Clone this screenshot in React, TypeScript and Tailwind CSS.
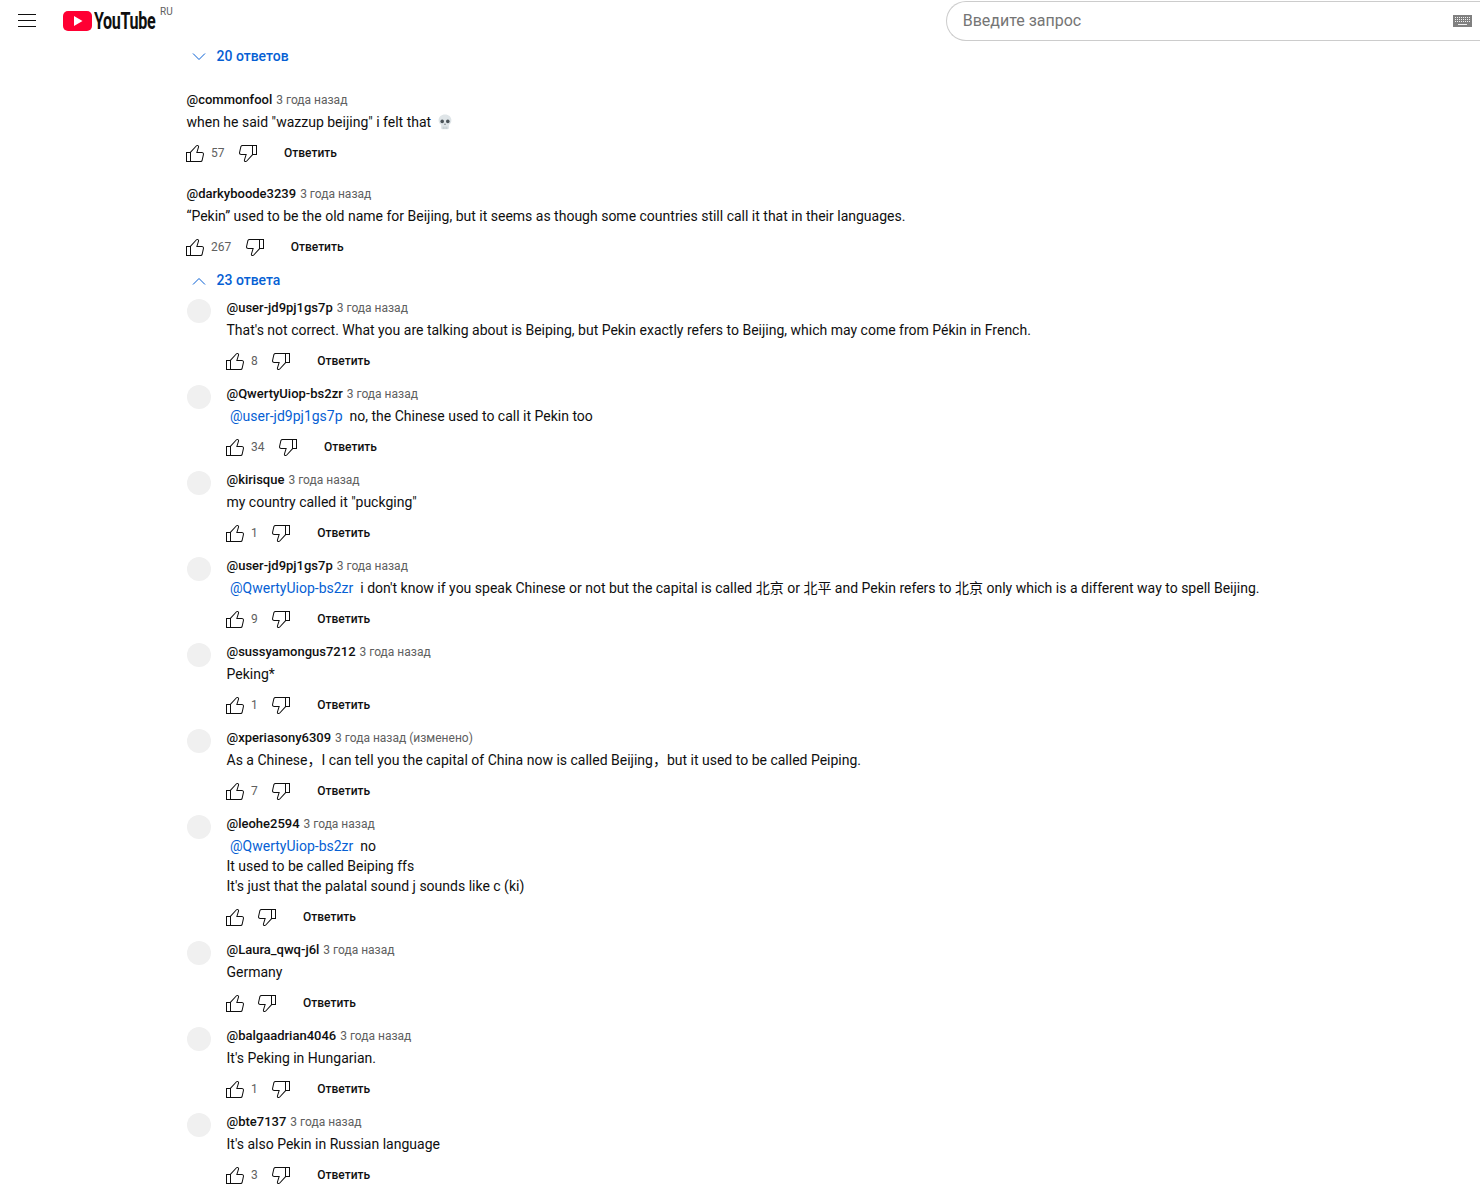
import type { ReactNode } from 'react'

const likePath =
  'M18.77,11h-4.23l1.52-4.94C16.38,5.03,15.54,4,14.38,4c-0.58,0-1.14,0.24-1.52,0.65L7,11H3v10h4h1h9.43c1.06,0,1.98-0.67,2.19-1.61l1.34-6C21.23,12.15,20.18,11,18.77,11z M7,20H4v-8h3V20z M19.98,13.17l-1.34,6C18.54,19.65,18.03,20,17.43,20H8v-8.61l5.6-6.06C13.79,5.12,14.08,5,14.38,5c0.26,0,0.5,0.11,0.63,0.3c0.07,0.1,0.15,0.26,0.09,0.47l-1.52,4.94L13.18,12h1.35h4.23c0.41,0,0.8,0.17,1.03,0.46C19.92,12.63,20.05,12.87,19.98,13.17z'
const dislikePath =
  'M17,4h-1H6.57C5.5,4,4.59,4.67,4.38,5.61l-1.34,6C2.77,12.85,3.82,14,5.23,14h4.23l-1.52,4.94C7.62,19.97,8.46,21,9.62,21c0.58,0,1.14-0.24,1.52-0.65L17,14h4V4H17z M10.4,19.67C10.21,19.88,9.92,20,9.62,20c-0.26,0-0.5-0.11-0.63-0.3c-0.07-0.1-0.15-0.26-0.09-0.47l1.52-4.94l0.4-1.29H9.46H5.23c-0.41,0-0.8-0.17-1.03-0.46c-0.12-0.15-0.25-0.4-0.18-0.72l1.34-6C5.46,5.35,5.97,5,6.57,5H16v8.61L10.4,19.67z M20,13h-3V5h3V13z'

function Icon({ d }: { d: string }) {
  return (
    <svg viewBox="0 0 24 24" className="h-6 w-6 shrink-0 fill-[#0f0f0f]">
      <path d={d} />
    </svg>
  )
}

function Mention({ children }: { children: string }) {
  return <span className="ml-[3.5px] mr-[7px] text-[#065fd4]">{children}</span>
}

// the fullwidth comma is narrower in the reference than in the CJK font here
function Comma() {
  return <span className="tracking-[-3.5px]">，</span>
}

function Skull() {
  return (
    <svg viewBox="0 0 14 16" className="ml-[3px] inline-block h-4 w-[14px] align-[-3px]">
      <path d="M7 .5C3.2.5.6 2.9.6 6.2c0 2.1 1 3.7 2.5 4.6v3.1c0 .8.6 1.4 1.4 1.4h5c.8 0 1.4-.6 1.4-1.4v-3.1c1.5-.9 2.5-2.5 2.5-4.6C13.4 2.9 10.8.5 7 .5z" fill="#dfe5e8" />
      <circle cx="4.2" cy="7.4" r="1.8" fill="#4b5358" />
      <circle cx="9.8" cy="7.4" r="1.8" fill="#4b5358" />
      <path d="M6.2 10.8h1.6L7 9.2z" fill="#4b5358" />
      <path d="M5.2 12.6v2.4M7 12.6v2.4M8.8 12.6v2.4" stroke="#a9b2b7" strokeWidth=".6" />
    </svg>
  )
}

type Comment = {
  name: string
  edited?: boolean
  count?: string
  body: ReactNode
}

const replies: Comment[] = [
  {
    name: '@user-jd9pj1gs7p',
    count: '8',
    body: "That's not correct. What you are talking about is Beiping, but Pekin exactly refers to Beijing, which may come from Pékin in French.",
  },
  {
    name: '@QwertyUiop-bs2zr',
    count: '34',
    body: (
      <>
        <Mention>@user-jd9pj1gs7p</Mention>no, the Chinese used to call it Pekin too
      </>
    ),
  },
  { name: '@kirisque', count: '1', body: 'my country called it "puckging"' },
  {
    name: '@user-jd9pj1gs7p',
    count: '9',
    body: (
      <>
        <Mention>@QwertyUiop-bs2zr</Mention>i don't know if you speak Chinese or not but the capital is called 北京 or 北平 and Pekin refers to 北京 only which is a different way to spell Beijing.
      </>
    ),
  },
  { name: '@sussyamongus7212', count: '1', body: 'Peking*' },
  {
    name: '@xperiasony6309',
    edited: true,
    count: '7',
    body: (
      <>
        As a Chinese<Comma /> I can tell you the capital of China now is called Beijing<Comma /> but it used to be called Peiping.
      </>
    ),
  },
  {
    name: '@leohe2594',
    body: (
      <>
        <Mention>@QwertyUiop-bs2zr</Mention>no
        <br />
        It used to be called Beiping ffs
        <br />
        It's just that the palatal sound j sounds like c (ki)
      </>
    ),
  },
  { name: '@Laura_qwq-j6l', body: 'Germany' },
  { name: '@balgaadrian4046', count: '1', body: "It's Peking in Hungarian." },
  { name: '@bte7137', count: '3', body: "It's also Pekin in Russian language" },
]

function CommentBody({ comment }: { comment: Comment }) {
  return (
    <div className="min-w-0 flex-1">
      <div className="flex h-[18px] items-center pl-[0.5px]">
        <span className="text-[13px] font-medium text-[#0f0f0f]">{comment.name}</span>
        <span className="ml-1 text-xs text-[#606060]">
          3 года назад
          {comment.edited && ' (изменено)'}
        </span>
      </div>
      <div className="mt-[3px] pl-[0.5px] text-sm leading-5 text-[#0f0f0f]">{comment.body}</div>
      <div className="mt-[9px] -ml-[3px] flex h-6 items-center">
        <Icon d={likePath} />
        {comment.count && <span className="ml-1 text-xs text-[#606060]">{comment.count}</span>}
        <div className={comment.count ? 'ml-[11.5px]' : 'ml-2'}>
          <Icon d={dislikePath} />
        </div>
        <span className="ml-6 text-xs font-medium text-[#0f0f0f]">Ответить</span>
      </div>
    </div>
  )
}

function RepliesToggle({ open, label }: { open: boolean; label: string }) {
  return (
    <div className="flex h-5 items-center pl-[6px] text-sm font-medium text-[#065fd4]">
      <svg viewBox="0 0 14 8" className="mt-[2px] h-2 w-[14px] fill-none stroke-[#065fd4]">
        <path d={open ? 'M1 7.5l6-6 6 6' : 'M1 .5l6 6 6-6'} />
      </svg>
      <span className="ml-[10.5px]">{label}</span>
    </div>
  )
}

export default function App() {
  return (
    <div className="h-[1197px] overflow-hidden bg-white font-['Roboto','Noto_Sans_CJK_SC',sans-serif]">
      <header className="flex h-[41px] items-start pt-px">
        <div className="ml-[18px] mt-[13px] flex w-[18px] flex-col gap-[5px]">
          <div className="h-px bg-[#0f0f0f]" />
          <div className="h-px bg-[#0f0f0f]" />
          <div className="h-px bg-[#0f0f0f]" />
        </div>
        <div className="ml-[27px] mt-[10px] flex h-5 w-[29px] items-center justify-center rounded-[5px] bg-[#ff0033]">
          <svg viewBox="0 0 10 10" className="h-[10px] w-[10px] fill-white">
            <path d="M1 0l8.5 5L1 10z" />
          </svg>
        </div>
        <span className="ml-[2px] mt-[7px] w-[62px] origin-left scale-x-[0.7] text-[23px] leading-7 font-bold tracking-[-0.5px] text-[#0f0f0f]">
          YouTube
        </span>
        <span className="ml-1 mt-[5px] text-[10px] leading-3 text-[#606060]">RU</span>
        <div className="ml-[773px] flex h-10 flex-1 items-center justify-between rounded-l-[20px] border border-r-0 border-[#cccccc] pl-4 pr-2">
          <span className="text-base text-[#757575]">Введите запрос</span>
          <svg viewBox="0 0 19 12" className="h-3 w-[19px]">
            <rect width="19" height="12" fill="#808080" />
            <path d="M2 2.5h15M2 4.5h15M2 6.5h15" stroke="#f0f0f0" strokeDasharray="1 1" />
            <path d="M5 9.5h9" stroke="#f0f0f0" />
          </svg>
        </div>
      </header>

      <main className="pl-[186px] pt-[5px]">
        <RepliesToggle open={false} label="20 ответов" />
        <div className="mt-[25px]">
          <CommentBody
            comment={{
              name: '@commonfool',
              count: '57',
              body: (
                <>
                  when he said "wazzup beijing" i felt that <Skull />
                </>
              ),
            }}
          />
        </div>
        <div className="mt-5">
          <CommentBody
            comment={{
              name: '@darkyboode3239',
              count: '267',
              body: '“Pekin” used to be the old name for Beijing, but it seems as though some countries still call it that in their languages.',
            }}
          />
        </div>
        <div className="mt-[11px]">
          <RepliesToggle open label="23 ответа" />
        </div>
        <div className="mt-[9px] flex flex-col gap-3">
          {replies.map((reply, i) => (
            <div key={i} className="flex">
              <div className="ml-px mr-[15px] h-6 w-6 shrink-0 rounded-full bg-[#f0f0f0]" />
              <CommentBody comment={reply} />
            </div>
          ))}
        </div>
      </main>
    </div>
  )
}
